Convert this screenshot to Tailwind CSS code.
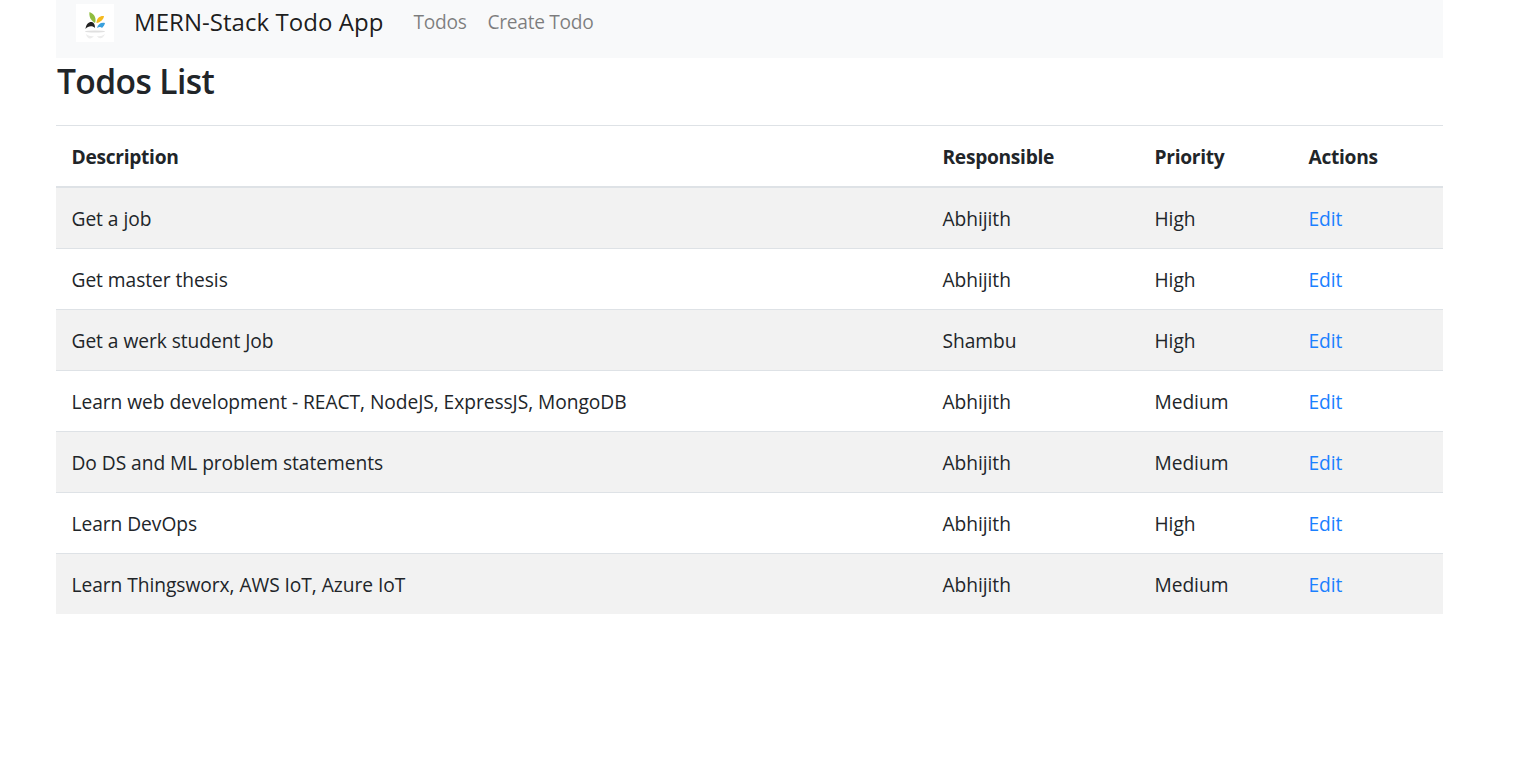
<!DOCTYPE html>
<html>
<head>
    <meta charset="UTF-8">
    <meta name="viewport" content="width=device-width, initial-scale=1.0">
    <title>MERN-Stack Todo App</title>
    <script src="https://cdn.jsdelivr.net/npm/@tailwindcss/browser@4"></script>
</head>
<body class="bg-white text-[#212529] font-['Open_Sans',sans-serif] text-[19.2px]">
    <div class="ml-[56px] w-[1387px]">
        <nav class="bg-[#f8f9fa] h-[58px] flex items-start pl-[20px]">
            <a href="#" class="mt-[4px] w-[38px] h-[38px] bg-white flex items-center justify-center">
                <svg width="38" height="38" viewBox="0 0 38 38">
                    <path d="M13.5 8 C13 12 14 16 19 19 C20.5 15 19 10 13.5 8Z" fill="#8fbc3f"/>
                    <path d="M28 12 C24 11.5 20.5 14 20.5 19 C24 18.5 27.5 16 28 12Z" fill="#f5b91e"/>
                    <path d="M9.5 25 C10 20 13 17.5 16 18 C18 18.5 19 21 19 24 C17 21.5 12 21.5 9.5 25Z" fill="#222"/>
                    <path d="M21 24 C22 20 25 18 29 19 C28.5 21 27.5 22.5 26 24 C25 22.5 23 22.5 21 24Z" fill="#3aa0dc"/>
                    <ellipse cx="19" cy="27.5" rx="10" ry="1" fill="#e0e0e0"/>
                    <path d="M10 30 C11 35 15 36 18 32 C15.5 32.5 12.5 32 10 30Z M21 32 C23 35.5 27 35 29 30 C26 32 24 32.5 21 32Z" fill="#ececec"/>
                </svg>
            </a>
            <a href="#" class="ml-[20px] text-[24px] leading-[44px] tracking-[0.05px] text-black/90">MERN-Stack Todo App</a>
            <ul class="flex ml-[30px] gap-[21px] leading-[44px] tracking-[-0.3px] text-black/50">
                <li><a href="#">Todos</a></li>
                <li><a href="#">Create Todo</a></li>
            </ul>
        </nav>
        <h3 class="text-[33.6px] font-semibold leading-[46px] mb-[21px] pl-[1px] tracking-[-0.6px]">Todos List</h3>
        <table class="w-full table-fixed border-collapse tracking-[-0.05px]">
            <colgroup>
                <col class="w-[871px]">
                <col class="w-[212px]">
                <col class="w-[154px]">
                <col>
            </colgroup>
            <thead>
                <tr class="border-t border-b-2 border-t-[#dee2e6] border-b-[#dee2e6] h-[61px] text-left tracking-[-0.3px]">
                    <th class="pl-[15.5px] pr-[15px] pt-[4px] font-bold">Description</th>
                    <th class="pl-[15.5px] pr-[15px] pt-[4px] font-bold">Responsible</th>
                    <th class="pl-[15.5px] pr-[15px] pt-[4px] font-bold">Priority</th>
                    <th class="pl-[15.5px] pr-[15px] pt-[4px] font-bold">Actions</th>
                </tr>
            </thead>
            <tbody>
                <tr class="h-[62px] border-b border-[#dee2e6] bg-[#f2f2f2]">
                    <td class="pl-[15.5px] pr-[15px] pt-[4px]">Get a job</td><td class="pl-[15.5px] pr-[15px] pt-[4px]">Abhijith</td><td class="pl-[15.5px] pr-[15px] pt-[4px]">High</td><td class="pl-[15.5px] pr-[15px] pt-[4px]"><a href="#" class="text-[#1a80ff]">Edit</a></td>
                </tr>
                <tr class="h-[61px] border-b border-[#dee2e6]">
                    <td class="pl-[15.5px] pr-[15px] pt-[2px]">Get master thesis</td><td class="pl-[15.5px] pr-[15px] pt-[2px]">Abhijith</td><td class="pl-[15.5px] pr-[15px] pt-[2px]">High</td><td class="pl-[15.5px] pr-[15px] pt-[2px]"><a href="#" class="text-[#1a80ff]">Edit</a></td>
                </tr>
                <tr class="h-[61px] border-b border-[#dee2e6] bg-[#f2f2f2]">
                    <td class="pl-[15.5px] pr-[15px] pt-[2px]">Get a werk student Job</td><td class="pl-[15.5px] pr-[15px] pt-[2px]">Shambu</td><td class="pl-[15.5px] pr-[15px] pt-[2px]">High</td><td class="pl-[15.5px] pr-[15px] pt-[2px]"><a href="#" class="text-[#1a80ff]">Edit</a></td>
                </tr>
                <tr class="h-[61px] border-b border-[#dee2e6]">
                    <td class="pl-[15.5px] pr-[15px] pt-[2px]">Learn web development - REACT, NodeJS, ExpressJS, MongoDB</td><td class="pl-[15.5px] pr-[15px] pt-[2px]">Abhijith</td><td class="pl-[15.5px] pr-[15px] pt-[2px]">Medium</td><td class="pl-[15.5px] pr-[15px] pt-[2px]"><a href="#" class="text-[#1a80ff]">Edit</a></td>
                </tr>
                <tr class="h-[61px] border-b border-[#dee2e6] bg-[#f2f2f2]">
                    <td class="pl-[15.5px] pr-[15px] pt-[2px]">Do DS and ML problem statements</td><td class="pl-[15.5px] pr-[15px] pt-[2px]">Abhijith</td><td class="pl-[15.5px] pr-[15px] pt-[2px]">Medium</td><td class="pl-[15.5px] pr-[15px] pt-[2px]"><a href="#" class="text-[#1a80ff]">Edit</a></td>
                </tr>
                <tr class="h-[61px] border-b border-[#dee2e6]">
                    <td class="pl-[15.5px] pr-[15px] pt-[2px]">Learn DevOps</td><td class="pl-[15.5px] pr-[15px] pt-[2px]">Abhijith</td><td class="pl-[15.5px] pr-[15px] pt-[2px]">High</td><td class="pl-[15.5px] pr-[15px] pt-[2px]"><a href="#" class="text-[#1a80ff]">Edit</a></td>
                </tr>
                <tr class="h-[60px] bg-[#f2f2f2]">
                    <td class="pl-[15.5px] pr-[15px] pt-[4px]">Learn Thingsworx, AWS IoT, Azure IoT</td><td class="pl-[15.5px] pr-[15px] pt-[4px]">Abhijith</td><td class="pl-[15.5px] pr-[15px] pt-[4px]">Medium</td><td class="pl-[15.5px] pr-[15px] pt-[4px]"><a href="#" class="text-[#1a80ff]">Edit</a></td>
                </tr>
            </tbody>
        </table>
    </div>
</body>
</html>
